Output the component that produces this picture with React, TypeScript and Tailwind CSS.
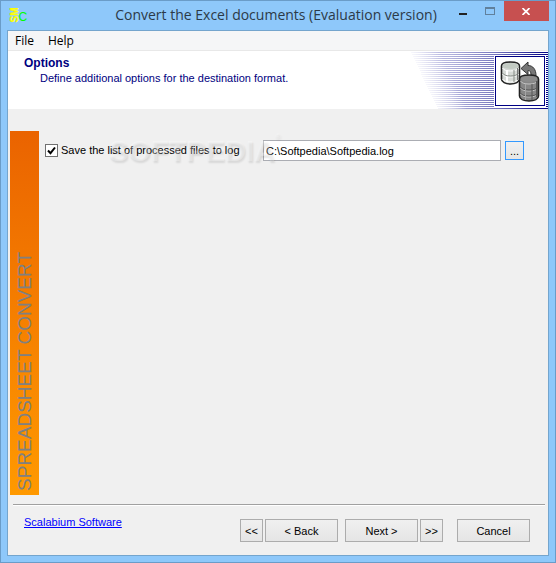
const menuItems = ["File", "Help"];

// one line every second pixel, each starting a bit further right
const stripes = Array.from({ length: 29 }, (_, i) => ({
  y: i * 2,
  start: Math.round(i * 0.95),
}));

const wizardButton =
  "h-[23px] border border-[#acacac] bg-linear-to-b from-[#f0f0f0] to-[#e5e5e5] text-center leading-5 text-black";

function AppLogo() {
  return (
    <svg width="20" height="18" viewBox="0 0 20 18" aria-hidden="true">
      <text
        transform="translate(9.5 17.500) rotate(-90)"
        fill="#ffff00"
        stroke="#ffff00"
        strokeWidth="0.3"
        fontSize="10"
        fontWeight="bold"
        fontFamily="Liberation Sans, sans-serif"
      >
        SM
      </text>
      <text x="10.500" y="15.500" fill="#00ff00" fontSize="12" fontFamily="Liberation Sans, sans-serif">
        C
      </text>
    </svg>
  );
}

function BannerStripes() {
  return (
    <svg className="block" width="137" height="58" viewBox="0 0 137 58" shapeRendering="crispEdges" aria-hidden="true">
      <defs>
        <linearGradient id="fade" gradientUnits="userSpaceOnUse" x1="0" y1="0" x2="137" y2="0">
          <stop offset="0" stopColor="#c8c8e8" />
          <stop offset="0.3" stopColor="#b0b0dc" />
          <stop offset="0.62" stopColor="#7474bc" />
          <stop offset="1" stopColor="#000084" />
        </linearGradient>
        <linearGradient id="edge" gradientUnits="userSpaceOnUse" x1="-4" y1="2" x2="24" y2="-11">
          <stop offset="0" stopColor="#fff" />
          <stop offset="1" stopColor="#fff" stopOpacity="0" />
        </linearGradient>
      </defs>
      {stripes.map((s) => (
        <rect key={s.y} x={s.start} y={s.y + 1} width={137 - s.start} height="1" fill="url(#fade)" />
      ))}
      <rect width="137" height="58" fill="url(#edge)" />
    </svg>
  );
}

function DatabaseIcon() {
  return (
    <svg className="block" width="50" height="50" viewBox="0 0 50 50" aria-hidden="true">
      <rect x="0.5" y="0.5" width="49" height="49" fill="#fff" stroke="#000084" />
      {/* source */}
      <path d="M6.500 10v13c0 3 4 5 9 5s9-2 9-5V10c0-2.500-4-4-9-4s-9 1.500-9 4z" fill="#d6dad6" stroke="#222" strokeWidth="1.600" />
      <ellipse cx="15.500" cy="10" rx="8" ry="3" fill="#c3cbc3" />
      <path d="M7.500 12c1 2 4 3 8 3s7-1 8-3M7.500 18c1 2 4 3 8 3s7-1 8-3M7.500 23c1 2 4 3 8 3s7-1 8-3" fill="none" stroke="#fff" />
      <path d="M12 14v12" stroke="#fff" strokeWidth="2" />
      <path d="M7.500 17c1 2 4 3 8 3s7-1 8-3M19 14v12" fill="none" stroke="#858b85" />
      <path d="M22.500 12v12" stroke="#777" />
      {/* arrow */}
      <path d="M26 12.500l7-6.500v3.500c5 0 8 4 8 10h-5c0-4-1-5-3-5v4z" fill="#777" stroke="#333" />
      {/* target */}
      <path d="M24.500 23v17c0 3 4 5 9.500 5s9.500-2 9.500-5V23c0-2.500-4-4-9.500-4s-9.500 1.500-9.500 4z" fill="#868686" stroke="#222" strokeWidth="1.600" />
      <ellipse cx="34" cy="23" rx="8" ry="3" fill="#8c8c8c" />
      <path d="M25.500 25c1 2 4 3 8.500 3s7.500-1 8.500-3M25.500 32c1 2 4 3 8.500 3s7.500-1 8.500-3M25.500 38c1 2 4 3 8.500 3s7.500-1 8.500-3" fill="none" stroke="#c4c4c4" />
      <path d="M25.500 31c1 2 4 3 8.500 3s7.500-1 8.500-3M25.500 37c1 2 4 3 8.500 3s7.500-1 8.500-3M37 28v16" fill="none" stroke="#555" />
      <path d="M30.500 28v16" stroke="#a6a6a6" />
      <path d="M42 25v16" stroke="#555" strokeWidth="2" />
    </svg>
  );
}

export default function App() {
  return (
    <div className="flex min-h-screen flex-col border border-[#6a9cc8] bg-[#8ec8fa] font-['Liberation_Sans',sans-serif] text-[11px] text-black">
      {/* Title bar */}
      <header className="flex h-[29px] items-start justify-between">
        <div className="flex w-[101px] pt-1 pl-[7px]">
          <AppLogo />
        </div>
        <h1 className="pt-[3px] font-['Open_Sans',sans-serif] text-[14px] leading-[22px] whitespace-nowrap text-[#2c3a48]">
          Convert the Excel documents (Evaluation version)
        </h1>
        <div className="flex pr-1.5">
          <button aria-label="Minimize" className="flex h-5 w-[27px] justify-center pt-3">
            <span className="h-0.5 w-2 bg-[#222]" />
          </button>
          <button aria-label="Maximize" className="flex h-5 w-[27px] justify-center pt-1.5" disabled>
            <span className="h-2 w-2.5 border border-t-2 border-[#60809c]" />
          </button>
          <button aria-label="Close" className="flex h-5 w-[45px] items-center justify-center bg-[#c75050]">
            <svg width="8" height="7" viewBox="0 0 8 7">
              <path d="M0.500 0l7 7M7.500 0l-7 7" stroke="#fff" strokeWidth="1.700" />
            </svg>
          </button>
        </div>
      </header>

      <div className="mx-1.5 mb-1.5 flex flex-1 flex-col border border-[#74a5cd] bg-[#f0f0f0]">
        {/* Menu */}
        <nav className="flex h-5 gap-3.5 border-b border-[#e8e8e8] bg-[#f5f6f7] pl-[7px] font-['Open_Sans',sans-serif] text-[12px] leading-5">
          {menuItems.map((item) => (
            <button key={item}>{item}</button>
          ))}
        </nav>

        {/* Banner */}
        <section className="flex h-[58px] justify-between bg-white text-[#000080]">
          <div className="pt-1 pl-4">
            <h2 className="text-[12px] leading-4 font-bold">Options</h2>
            <p className="pl-4 leading-[14px] whitespace-nowrap">
              Define additional options for the destination format.
            </p>
          </div>
          <div className="relative">
            <BannerStripes />
            <div className="absolute top-1 right-0.5 border border-white">
              <DatabaseIcon />
            </div>
          </div>
        </section>

        {/* Options */}
        <main className="flex flex-1 items-stretch pt-[22px] pr-6 pl-0.5">
          <aside className="flex w-[29px] items-end justify-center bg-linear-to-b from-[#ea6300] to-[#ff9900] pb-1">
            <span className="rotate-180 text-[19px] leading-[29px] whitespace-nowrap text-[#808080] [writing-mode:vertical-rl]">
              SPREADSHEET CONVERT
            </span>
          </aside>
          <div className="relative flex flex-1 items-start pt-[9px] pl-1.5">
            <label className="flex h-5 w-[218px] shrink-0 items-center gap-[3px] whitespace-nowrap">
              <span className="relative flex">
                <input type="checkbox" defaultChecked className="peer size-[13px] appearance-none border border-[#707070] bg-white" />
                <svg className="pointer-events-none absolute inset-0 hidden peer-checked:block" width="13" height="13" viewBox="0 0 13 13">
                  <path d="M3 6.500l2.500 2.700L10 3.500" fill="none" stroke="#000" strokeWidth="2" />
                </svg>
              </span>
              Save the list of processed files to log
            </label>
            <input
              aria-label="Log file"
              defaultValue="C:\Softpedia\Softpedia.log"
              className="h-[21px] min-w-0 flex-1 border border-[#abadb3] bg-white px-0.5"
            />
            <button aria-label="Browse" className="mt-px ml-1 h-[19px] w-[19px] border border-[#3399ff] bg-linear-to-b from-[#f0f0f0] to-[#e5e5e5] leading-4">
              ...
            </button>
            <span className="pointer-events-none absolute top-1 left-[70px] text-[29px] leading-8 font-bold text-white/30 [text-shadow:1px_2px_2px_rgba(0,0,0,0.1)]">
              SOFTPEDIA<sup className="align-top text-[8px] leading-3 font-normal">®</sup>
            </span>
          </div>
        </main>

        {/* Wizard navigation */}
        <footer className="mt-[9px] pr-[3px] pl-[5px]">
          <hr className="border-t border-b border-t-[#a0a0a0] border-b-white" />
          <div className="flex h-[49px] items-start justify-between pt-[13px] pr-[15px] pl-[11px]">
            <a href="#scalabium" className="-mt-1 leading-[14px] text-[#0000ff] underline">
              Scalabium Software
            </a>
            <div className="flex">
              <button className={wizardButton + " w-[23px]"}>&lt;&lt;</button>
              <button className={wizardButton + " ml-0.5 w-[73px]"}>&lt; Back</button>
              <button className={wizardButton + " ml-[7px] w-[73px]"}>Next &gt;</button>
              <button className={wizardButton + " ml-0.5 w-[23px]"}>&gt;&gt;</button>
              <button className={wizardButton + " ml-3.5 w-[73px]"}>Cancel</button>
            </div>
          </div>
        </footer>
      </div>
    </div>
  );
}
